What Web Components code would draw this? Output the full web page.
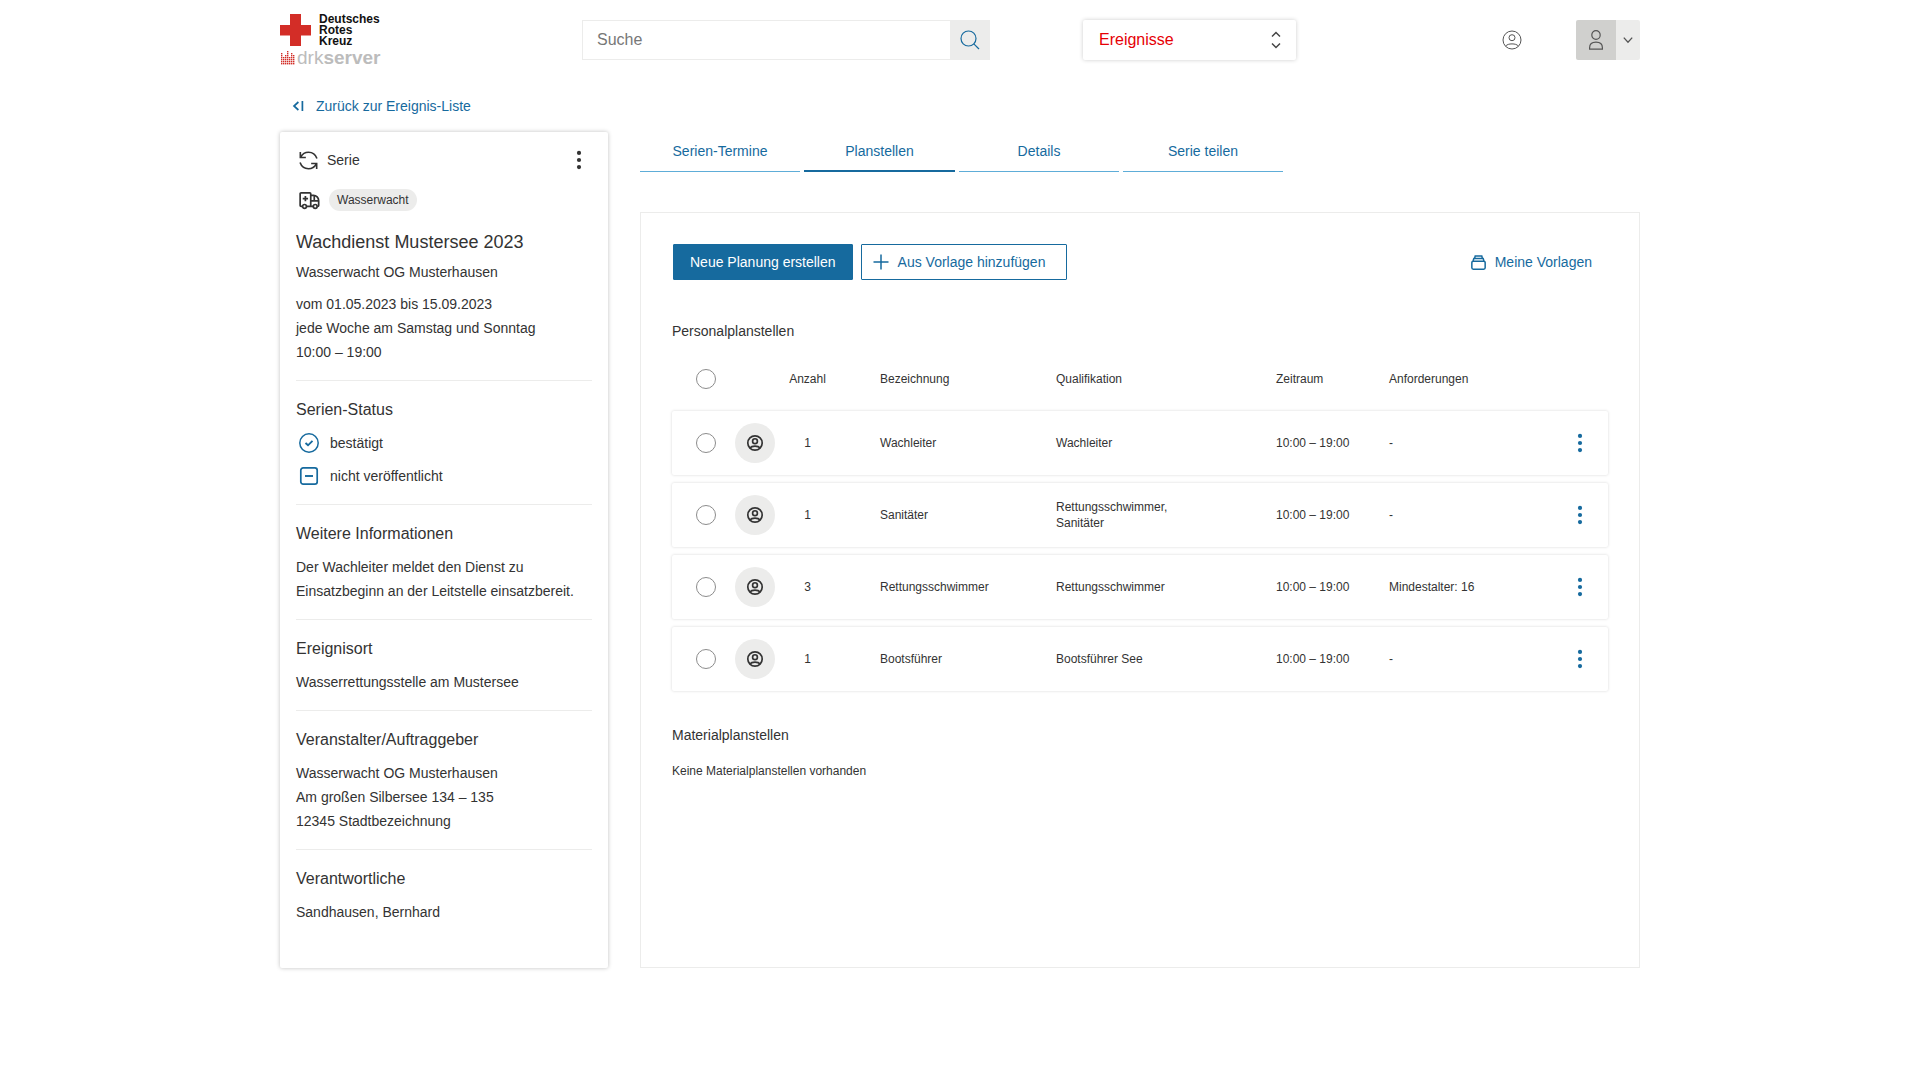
<!DOCTYPE html>
<html lang="de">
<head>
<meta charset="utf-8">
<title>drkserver – Wachdienst Mustersee 2023</title>
<style>
  :root { --blue: #166a9e; --sky: #5eadd8; --text: #333; --line: #ececeb; }
  body { margin: 0; background: #fff; color: var(--text); font: 14px/24px "Liberation Sans", Arial, sans-serif; }
</style>
</head>
<body>
<app-shell>
  <app-header slot="header"></app-header>
  <back-link slot="back" href="#ereignisse">Zurück zur Ereignis-Liste</back-link>
  <event-card slot="side" kind="Serie" tag="Wasserwacht">
    <span slot="title">Wachdienst Mustersee 2023</span>
    <span slot="org">Wasserwacht OG Musterhausen</span>
    <span slot="time">vom 01.05.2023 bis 15.09.2023<br>jede Woche am Samstag und Sonntag<br>10:00 – 19:00</span>
    <info-section heading="Serien-Status">
      <status-line icon="check">bestätigt</status-line>
      <status-line icon="minus">nicht veröffentlicht</status-line>
    </info-section>
    <info-section heading="Weitere Informationen">Der Wachleiter meldet den Dienst zu<br>Einsatzbeginn an der Leitstelle einsatzbereit.</info-section>
    <info-section heading="Ereignisort">Wasserrettungsstelle am Mustersee</info-section>
    <info-section heading="Veranstalter/Auftraggeber">Wasserwacht OG Musterhausen<br>Am großen Silbersee 134 – 135<br>12345 Stadtbezeichnung</info-section>
    <info-section heading="Verantwortliche">Sandhausen, Bernhard</info-section>
  </event-card>
  <tab-bar slot="main" active="1" tabs="Serien-Termine|Planstellen|Details|Serie teilen"></tab-bar>
  <plan-panel slot="main">
    <action-button slot="actions" primary>Neue Planung erstellen</action-button>
    <action-button slot="actions" icon="plus">Aus Vorlage hinzufügen</action-button>
    <template-link slot="aside" href="#vorlagen">Meine Vorlagen</template-link>
    <plan-table></plan-table>
    <span slot="material">Keine Materialplanstellen vorhanden</span>
  </plan-panel>
</app-shell>

<script>
const define = (name, render) => customElements.define(name, class extends HTMLElement {
  connectedCallback() {
    if (this.shadowRoot) return;
    const t = document.createElement('template');
    t.innerHTML = render(this);
    this.attachShadow({ mode: 'open' }).append(t.content.cloneNode(true));
  }
});

const PERSON = '<circle cx="10" cy="10" r="9"/><circle cx="10" cy="7.7" r="3"/><path d="M3.6 16.2C5 14.4 7.2 13.9 10 13.9s5 .5 6.4 2.3"/>';
const ICONS = {
  search: [20, 1.2, '<circle cx="8.5" cy="8.5" r="7.5"/><path d="M13.8 13.8 19 19"/>'],
  account: [20, 1, PERSON],
  person: [20, 1.2, '<ellipse cx="10" cy="5" rx="4.2" ry="4.4"/><path d="M3.6 19.2v-1.4c0-3.4 2.6-5.6 6.4-5.6s6.4 2.2 6.4 5.6v1.4z"/>'],
  down: [10, 1.3, '<path d="M.8 2.6 5 7.2l4.2-4.6"/>'],
  updown: [20, 1.4, '<path d="M6 6.6 10 2.4l4 4.2M6 13.4l4 4.2 4-4.2"/>'],
  back: [12, 1.7, '<path d="M6.4 2 2 6l4.4 4M10.4 1v10"/>'],
  sync: [20, 1.7, '<path d="M1.4 1v5.8h5.8M1.8 6.4C3.600 3 6.600 1.300 10 1.300c4.200 0 7.500 2.600 8.900 6.500M18.600 19v-5.800h-5.800M18.200 13.600C16.400 17 13.400 18.700 10 18.700c-4.200 0-7.500-2.600-8.900-6.500"/>'],
  dots: [20, 0, '<g fill="currentColor"><circle cx="10" cy="2.900" r="2.100"/><circle cx="10" cy="10" r="2.100"/><circle cx="10" cy="17.100" r="2.100"/></g>'],
  truck: [22, 1.8, '<path d="M3.600 17.200H2.200A1 1 0 0 1 1.200 16.200V4a1 1 0 0 1 1-1h9.100a1 1 0 0 1 1 1v13.200H8M12.300 5.600h2.900c3 0 5.400 2.600 5.400 5.600v5a1 1 0 0 1-1 1M14.800 17.200h-2.500M12.300 11.500h8.300M16 6v5.500M6.700 6.200v5.600M3.900 9h5.600"/><circle cx="5.800" cy="17.200" r="2"/><circle cx="17" cy="17.200" r="2"/>'],
  check: [20, 1.500, '<circle cx="10" cy="10" r="9.200"/><path stroke-width="1.900" d="m6.500 10 2.500 2.300L13.500 7.800"/>'],
  minus: [20, 1.700, '<rect x="1.800" y="1.800" width="16.400" height="16.400" rx="2.400"/><path stroke-width="1.900" d="M6 10h8"/>'],
  plus: [16, 1.500, '<path d="M8 .5v15M.5 8h15"/>'],
  stack: [16, 1.600, '<rect x=".9" y="6.600" width="14.200" height="8.600" rx="1.500"/><path d="M2.200 6.300 3 3.800h10l.8 2.500M3.900 3.500l.6-2.500h7l.6 2.500"/>'],
  avatar: [20, 2.100, PERSON]
};

define('ui-icon', el => {
  const [box, stroke, body] = ICONS[el.getAttribute('name')];
  const size = el.getAttribute('size') || box;
  return `<style>:host{display:inline-flex;flex:none}svg{display:block;fill:none;stroke:currentColor;overflow:visible}</style>
  <svg width="${size}" height="${size}" viewBox="0 0 ${box} ${box}" stroke-width="${stroke}" aria-hidden="true">${body}</svg>`;
});

define('app-shell', () => `<style>
  :host{display:block;max-width:1360px;margin:0 auto;padding:14px 16px 32px}
  .cols{display:grid;grid-template-columns:328px minmax(0,1fr);column-gap:32px;margin-top:13px}
  main{display:flex;flex-direction:column;min-width:0}
</style>
<slot name="header"></slot><slot name="back"></slot>
<div class="cols"><slot name="side"></slot><main><slot name="main"></slot></main></div>`);

define('drk-logo', () => {
  let dots = '';
  [6, 4, 5, 7, 4, 6, 5].forEach((n, c) => { for (let r = 0; r < n; r++) dots += `<rect x="${c * 2}" y="${12 - r * 2}" width="1.400" height="1.400"/>`; });
  return `<style>
  :host{display:block;width:102px;height:52px;color:#111}
  .top,.bottom{display:flex}
  .top{gap:8px;height:35px;font:bold 12px/11px "Liberation Sans",Arial,sans-serif}
  .bottom{height:18px;font:19px/18px "Liberation Sans",Arial,sans-serif;color:#bcbcbc;align-items:center}
  svg{display:block;flex:none;fill:#d32d27}
</style>
<div class="top"><svg width="31" height="32" viewBox="0 0 31 32"><path d="M10 0h11v11h10v10.500H21V32H10V21.500H0V11h10z"/></svg><span>Deutsches<br>Rotes<br>Kreuz</span></div>
<div class="bottom"><svg width="17" height="14" viewBox="-1 0 17 14">${dots}</svg><span>drk<b>server</b></span></div>`;
});

define('search-box', () => `<style>
  :host{display:block}
  form{display:flex;height:40px}
  input{flex:1;min-width:0;box-sizing:border-box;border:1px solid var(--line);border-right:0;border-radius:0;padding:0 14px;font:16px/24px "Liberation Sans",Arial,sans-serif;outline:0}
  input::placeholder{color:#777;opacity:1}
  button{display:flex;align-items:center;justify-content:center;width:40px;border:0;padding:0;background:var(--line);color:var(--blue)}
</style>
<form role="search"><input type="text" placeholder="Suche" aria-label="Suche"><button type="button" aria-label="Suchen"><ui-icon name="search"></ui-icon></button></form>`);

define('area-select', () => `<style>
  :host{display:grid;align-items:center;border-radius:2px;box-shadow:0 0 4px rgba(0,0,0,.2);background:#fff}
  select{grid-area:1/1;appearance:none;width:100%;height:40px;border:0;background:none;padding:0 40px 0 16px;color:#e60005;font:16px/24px "Liberation Sans",Arial,sans-serif}
  ui-icon{grid-area:1/1;justify-self:end;margin-right:10px;color:#444;pointer-events:none}
</style>
<select aria-label="Bereich"><option>Ereignisse</option></select><ui-icon name="updown"></ui-icon>`);

define('app-header', () => `<style>
  :host{display:flex;align-items:flex-start}
  search-box{flex:0 1 408px;margin:6px 0 0 200px}
  area-select{flex:0 1 213px;margin:6px auto 0 93px}
  button{display:flex;align-items:center;justify-content:center;height:40px;border:0;padding:0;background:none;color:#555}
  .account{width:20px;margin:6px 54px 0 0}
  .user{display:flex;margin-top:6px;border-radius:2px;overflow:hidden}
  .me{width:40px;background:#d0d0ce}
  .more{width:24px;background:var(--line)}
</style>
<drk-logo></drk-logo><search-box></search-box><area-select></area-select>
<button class="account" aria-label="Konto"><ui-icon name="account"></ui-icon></button>
<div class="user"><button class="me" aria-label="Profil"><ui-icon name="person"></ui-icon></button><button class="more" aria-label="Menü öffnen"><ui-icon name="down"></ui-icon></button></div>`);

define('back-link', el => `<style>
  :host{display:block;margin-top:28px;padding-left:12px}
  a{display:inline-flex;align-items:center;gap:12px;color:var(--blue);text-decoration:none}
</style><a href="${el.getAttribute('href')}"><ui-icon name="back"></ui-icon><slot></slot></a>`);

define('event-card', el => `<style>
  :host{display:block;padding:16px 16px 28px;border-radius:2px;box-shadow:0 0 4px rgba(0,0,0,.25);background:#fff}
  .row{display:flex;align-items:center;height:24px;margin-bottom:16px;padding-left:3px;gap:9px}
  .row button{display:flex;margin-left:auto;border:0;padding:0 3px;background:none;color:inherit}
  .tag{border-radius:11px;padding:0 8px;background:var(--line);font-size:12px;line-height:22px}
  h1{margin:0 0 4px;font-weight:400;font-size:18px;line-height:28px}
  p{margin:0 0 8px}
  .time{margin-bottom:16px}
</style>
<div class="row"><ui-icon name="sync" size="19"></ui-icon><span>${el.getAttribute('kind')}</span><button aria-label="Aktionen"><ui-icon name="dots"></ui-icon></button></div>
<div class="row"><ui-icon name="truck" size="21"></ui-icon><span class="tag">${el.getAttribute('tag')}</span></div>
<h1><slot name="title"></slot></h1><p><slot name="org"></slot></p><p class="time"><slot name="time"></slot></p>
<slot></slot>`);

define('info-section', el => `<style>
  :host{display:block;border-top:1px solid var(--line);padding:17px 0 16px}
  h2{margin:0 0 9px;font-weight:400;font-size:16px;line-height:24px}
</style><h2>${el.getAttribute('heading')}</h2><div><slot></slot></div>`);

define('status-line', el => `<style>
  :host{display:flex;align-items:center;gap:11px;padding-left:3px;line-height:24px}
  :host(:not(:last-child)){margin-bottom:9px}
  ui-icon{color:var(--blue)}
</style><ui-icon name="${el.getAttribute('icon')}"></ui-icon><span><slot></slot></span>`);

define('tab-bar', el => `<style>
  :host{display:block}
  nav{display:flex;gap:4px}
  a{flex:0 1 160px;box-sizing:border-box;height:40px;border-bottom:1px solid var(--sky);color:var(--blue);text-align:center;text-decoration:none;line-height:38px}
  a[aria-current]{flex-basis:151px;border-bottom:2px solid var(--blue)}
</style><nav>${el.getAttribute('tabs').split('|').map((t, i) =>
  `<a href="#tab${i}"${i == el.getAttribute('active') ? ' aria-current="page"' : ''}>${t}</a>`).join('')}</nav>`);

define('action-button', el => `<style>
  :host{display:block}
  button{display:flex;align-items:center;gap:9px;height:36px;border:1px solid var(--blue);border-radius:1px;padding:0 21px 0 11px;background:#fff;color:var(--blue);font:14px/24px "Liberation Sans",Arial,sans-serif}
  :host([primary]) button{padding:0 16px;background:var(--blue);color:#fff}
</style><button>${el.hasAttribute('icon') ? `<ui-icon name="${el.getAttribute('icon')}"></ui-icon>` : ''}<slot></slot></button>`);

define('template-link', el => `<style>
  :host{display:block}
  a{display:flex;align-items:center;gap:9px;color:var(--blue);text-decoration:none}
</style><a href="${el.getAttribute('href')}"><ui-icon name="stack" size="15"></ui-icon><slot></slot></a>`);

define('plan-panel', () => `<style>
  :host{display:block;flex:1;margin-top:40px;border:1px solid var(--line);padding:31px;box-sizing:border-box}
  .bar{display:flex;gap:8px;align-items:center;margin-bottom:39px;padding-left:1px}
  .aside{margin:0 16px 0 auto}
  h2{margin:0;font-weight:400;font-size:14px;line-height:24px}
  .material{margin-top:24px}
  p{margin:12px 0 0;font-size:12px}
</style>
<div class="bar"><slot name="actions"></slot><div class="aside"><slot name="aside"></slot></div></div>
<h2>Personalplanstellen</h2><slot></slot>
<h2 class="material">Materialplanstellen</h2><p><slot name="material"></slot></p>`);

const PLANS = [
  ['1', 'Wachleiter', 'Wachleiter', '10:00 – 19:00', '-'],
  ['1', 'Sanitäter', 'Rettungsschwimmer, Sanitäter', '10:00 – 19:00', '-'],
  ['3', 'Rettungsschwimmer', 'Rettungsschwimmer', '10:00 – 19:00', 'Mindestalter: 16'],
  ['1', 'Bootsführer', 'Bootsführer See', '10:00 – 19:00', '-']
];

define('plan-table', () => `<style>
  :host{display:block;margin-top:4px}
  table{width:100%;table-layout:fixed;border-collapse:separate;border-spacing:0 8px;font-size:12px;line-height:16px}
  .c1{width:63px}.c2{width:40px}.c3{width:105px}.c4{width:176px}.c5{width:220px}.c6{width:113px}.c8{width:56px}
  th,td{padding:0;text-align:left;font-weight:400;vertical-align:middle}
  th{height:48px}
  td{height:64px}
  tbody tr{border-radius:2px;box-shadow:0 0 3px rgba(0,0,0,.16)}
  .pick{padding-left:24px}
  .num{text-align:center;padding-right:40px}
  .qual{padding-right:80px}
  input{display:block;appearance:none;box-sizing:border-box;width:20px;height:20px;margin:0;border:1px solid #8c8c8c;border-radius:50%;background:#fff}
  .avatar{display:flex;align-items:center;justify-content:center;width:40px;height:40px;border-radius:50%;background:var(--line)}
  button{display:flex;margin:0 auto;border:0;padding:0;background:none;color:var(--blue)}
</style>
<table>
<colgroup><col class="c1"><col class="c2"><col class="c3"><col class="c4"><col class="c5"><col class="c6"><col><col class="c8"></colgroup>
<thead><tr><th class="pick"><input type="checkbox" aria-label="Alle auswählen"></th><th></th><th class="num">Anzahl</th><th>Bezeichnung</th><th>Qualifikation</th><th>Zeitraum</th><th>Anforderungen</th><th></th></tr></thead>
<tbody>${PLANS.map(([n, name, qual, time, req]) => `<tr><td class="pick"><input type="checkbox" aria-label="${name} auswählen"></td>
<td><span class="avatar"><ui-icon name="avatar" size="16"></ui-icon></span></td><td class="num">${n}</td><td>${name}</td><td class="qual">${qual}</td><td>${time}</td><td>${req}</td>
<td><button aria-label="Aktionen für ${name}"><ui-icon name="dots"></ui-icon></button></td></tr>`).join('')}</tbody>
</table>`);
</script>
</body>
</html>
